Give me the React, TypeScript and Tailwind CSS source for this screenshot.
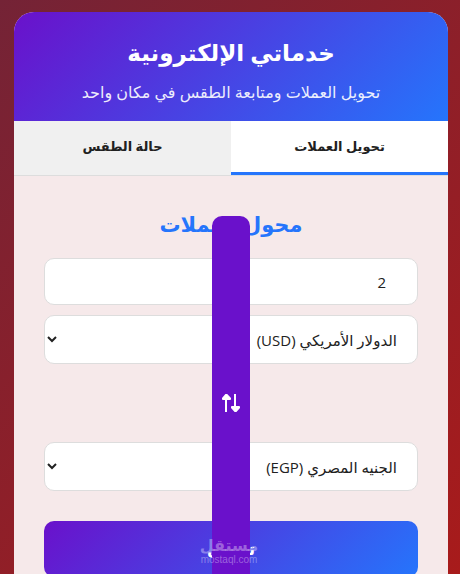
import React, { useState } from 'react';

const CURRENCIES = [
  { code: 'USD', label: 'الدولار الأمريكي (USD)' },
  { code: 'EGP', label: 'الجنيه المصري (EGP)' },
];

const SwapIcon: React.FC = () => (
  <svg viewBox="0 0 18 18" className="w-[18px] h-[18px] -rotate-90" fill="currentColor" aria-hidden="true">
    <path d="M3 18V6H.6L0 5.2V4L3.4 0h1.8L9 4v1.2l-.6.8H5v12z" />
    <path d="M12 0v12H9.6l-.6.8V14l3.6 4h1.8l3.6-4v-1.2l-.6-.8H14V0z" />
  </svg>
);

const Watermark: React.FC = () => (
  <div className="absolute inset-x-0 top-4 pr-[4px] flex flex-col items-center text-white/35 pointer-events-none" aria-hidden="true">
    <span className="text-base leading-4 font-bold">مستقل</span>
    <span className="text-[10px] leading-[14px] font-medium font-['Liberation_Sans',sans-serif]">mostaql.com</span>
  </div>
);

const CurrencySelect: React.FC<{ label: string; value: string; onChange: (code: string) => void }> = ({ label, value, onChange }) => (
  <select
    aria-label={label}
    value={value}
    onChange={(e) => onChange(e.target.value)}
    className="block w-full h-[49px] px-4 bg-white border border-[#ddd] rounded-[10px] text-[15px] text-[#212121]"
  >
    {CURRENCIES.map((c) => (
      <option key={c.code} value={c.code}>{c.label}</option>
    ))}
  </select>
);

const App: React.FC = () => {
  const [tab, setTab] = useState('currency');
  const [amount, setAmount] = useState('2');
  const [from, setFrom] = useState('USD');
  const [to, setTo] = useState('EGP');

  const swap = () => {
    setFrom(to);
    setTo(from);
  };

  const tabClass = (name: string) =>
    tab === name ? 'bg-white border-b-[3px] border-[#2575fc]' : 'bg-[#f0f0f0] border-b-[3px] border-transparent';

  return (
    <div
      dir="rtl"
      className="h-screen overflow-hidden pt-3 pl-[14px] pr-3 bg-[linear-gradient(135deg,#742336,#a81b1b)] font-['Open_Sans','DejaVu_Sans',sans-serif] text-[#212121]"
    >
      <main className="rounded-t-[20px] overflow-hidden bg-[#f6e9ea] pb-8">
        <header className="h-[109px] pt-5 bg-[linear-gradient(135deg,#6a11cb,#2575fc)] text-white text-center">
          <h1 className="text-[23px] leading-[40px] font-bold">خدماتي الإلكترونية</h1>
          <p className="mt-2 text-base leading-6 opacity-90">تحويل العملات ومتابعة الطقس في مكان واحد</p>
        </header>

        <nav className="flex h-[55px] border-b border-[#ddd] text-[13px] font-bold">
          <button type="button" onClick={() => setTab('currency')} className={`flex-1 ${tabClass('currency')}`}>
            تحويل العملات
          </button>
          <button type="button" onClick={() => setTab('weather')} className={`flex-1 ${tabClass('weather')}`}>
            حالة الطقس
          </button>
        </nav>

        <section className="px-[30px] pt-[30px]">
          <h2 className="mb-4 text-[21px] leading-9 font-bold text-center text-[#2575fc]">محول العملات</h2>

          <input
            type="number"
            aria-label="المبلغ"
            value={amount}
            onChange={(e) => setAmount(e.target.value)}
            className="block w-full h-[47px] mb-[10px] pr-[31px] pl-4 bg-white border border-[#ddd] rounded-[10px] text-[15px]"
          />
          <CurrencySelect label="من عملة" value={from} onChange={setFrom} />

          {/* Full-width swap button turned on its side */}
          <button
            type="button"
            aria-label="تبديل العملات"
            onClick={swap}
            className="relative z-10 flex items-center justify-center w-full h-[38px] my-5 rounded-[10px] bg-[#6a11cb] text-white rotate-90"
          >
            <SwapIcon />
          </button>

          <CurrencySelect label="إلى عملة" value={to} onChange={setTo} />

          <div className="relative mt-[30px]">
            <button
              type="button"
              className="w-full h-14 rounded-[10px] bg-[linear-gradient(135deg,#6a11cb,#2575fc)] text-white text-base font-bold"
            >
              تحويل
            </button>
            <div className="absolute inset-0 z-20 pointer-events-none">
              <Watermark />
            </div>
          </div>
        </section>
      </main>
    </div>
  );
};

export default App;
